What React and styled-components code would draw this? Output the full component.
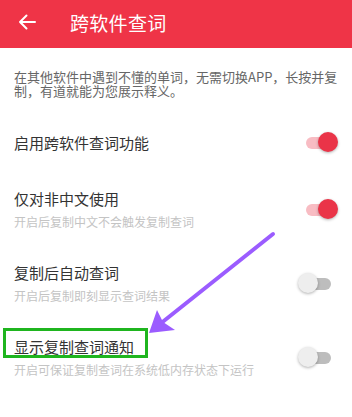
import styled, { createGlobalStyle } from "styled-components";

const GlobalStyle = createGlobalStyle`
  html, body {
    margin: 0;
    padding: 0;
    background: #ffffff;
  }
  body {
    font-family: "Noto Sans CJK SC", "Noto Sans", sans-serif;
  }
`;

const settings = [
  { title: "启用跨软件查词功能", on: true },
  { title: "仅对非中文使用", desc: "开启后复制中文不会触发复制查词", on: true },
  { title: "复制后自动查词", desc: "开启后复制即刻显示查词结果", on: false },
  {
    title: "显示复制查词通知",
    desc: "开启可保证复制查词在系统低内存状态下运行",
    on: false,
    marked: true,
  },
];

export default function App() {
  return (
    <Page>
      <GlobalStyle />
      <Header>
        <BackBtn>
          <svg width="18" height="16" viewBox="0 0 18 16">
            <path
              d="M17 8H2M8.5 1.5L2 8l6.5 6.5"
              fill="none"
              stroke="#fff"
              strokeWidth="2"
              strokeLinecap="round"
              strokeLinejoin="round"
            />
          </svg>
        </BackBtn>
        <HeaderTitle>跨软件查词</HeaderTitle>
      </Header>

      <Intro>
        在其他软件中遇到不懂的单词，无需切换APP，长按并复制，有道就能为您展示释义。
      </Intro>

      <List>
        {settings.map((item) => (
          <Row key={item.title} $single={!item.desc}>
            <Texts>
              <Title>
                {item.marked ? <Marked>{item.title}</Marked> : item.title}
              </Title>
              {item.desc && <Desc>{item.desc}</Desc>}
            </Texts>
            <Switch $on={item.on}>
              <Track $on={item.on} />
              <Thumb $on={item.on} />
            </Switch>
          </Row>
        ))}
      </List>

      <Annotation width="352" height="417" viewBox="0 0 352 417">
        <line
          x1="273"
          y1="234"
          x2="160"
          y2="324"
          stroke="#9b5cff"
          strokeWidth="4"
          strokeLinecap="round"
        />
        <path d="M149 333 L157 310 L163 322 L175 330 Z" fill="#9b5cff" />
      </Annotation>
    </Page>
  );
}

const Page = styled.div`
  position: relative;
  width: 352px;
  height: 417px;
  overflow: hidden;
  background: #fff;
`;

const Header = styled.header`
  display: flex;
  align-items: center;
  height: 48px;
  padding: 0 0 4px 18px;
  box-sizing: border-box;
  background: #ef3447;
`;

const BackBtn = styled.div`
  display: flex;
  align-items: center;
  width: 52px;
`;

const HeaderTitle = styled.h1`
  margin: 0;
  font-size: 19px;
  font-weight: 400;
  color: #fff;
  letter-spacing: 0.3px;
`;

const Intro = styled.p`
  margin: 0;
  padding: 22px 12px 16px 14px;
  font-size: 13px;
  line-height: 14px;
  color: #666;
`;

const List = styled.div`
  display: flex;
  flex-direction: column;
`;

const Row = styled.div`
  display: flex;
  align-items: center;
  justify-content: space-between;
  padding: ${(p) => (p.$single ? "18px 14px" : "16px 14px 15px")};
`;

const Texts = styled.div`
  display: flex;
  flex-direction: column;
`;

const Title = styled.div`
  font-size: 15px;
  line-height: 22px;
  color: #333;
`;

const Marked = styled.span`
  position: relative;
  display: inline-block;

  &::after {
    content: "";
    position: absolute;
    left: -11px;
    right: -14px;
    top: -8px;
    bottom: 0;
    border: 3.5px solid #1fb51f;
  }
`;

const Desc = styled.div`
  margin-top: 3px;
  font-size: 12px;
  line-height: 18px;
  color: #c4c4c4;
`;

const Switch = styled.div`
  position: relative;
  width: 40px;
  height: 22px;
  flex-shrink: 0;
`;

const Track = styled.div`
  position: absolute;
  top: 5px;
  left: ${(p) => (p.$on ? "8px" : "3px")};
  width: 30px;
  height: 12px;
  border-radius: 6px;
  background: ${(p) => (p.$on ? "#f8bcc3" : "#bdbdbd")};
`;

const Thumb = styled.div`
  position: absolute;
  top: 0;
  left: ${(p) => (p.$on ? "20px" : "0")};
  width: 20px;
  height: 20px;
  border-radius: 50%;
  background: ${(p) => (p.$on ? "#ea3448" : "#eeeeee")};
  box-shadow: 0 1px 3px rgba(0, 0, 0, 0.3);
`;

const Annotation = styled.svg`
  position: absolute;
  top: 0;
  left: 0;
  pointer-events: none;
`;
